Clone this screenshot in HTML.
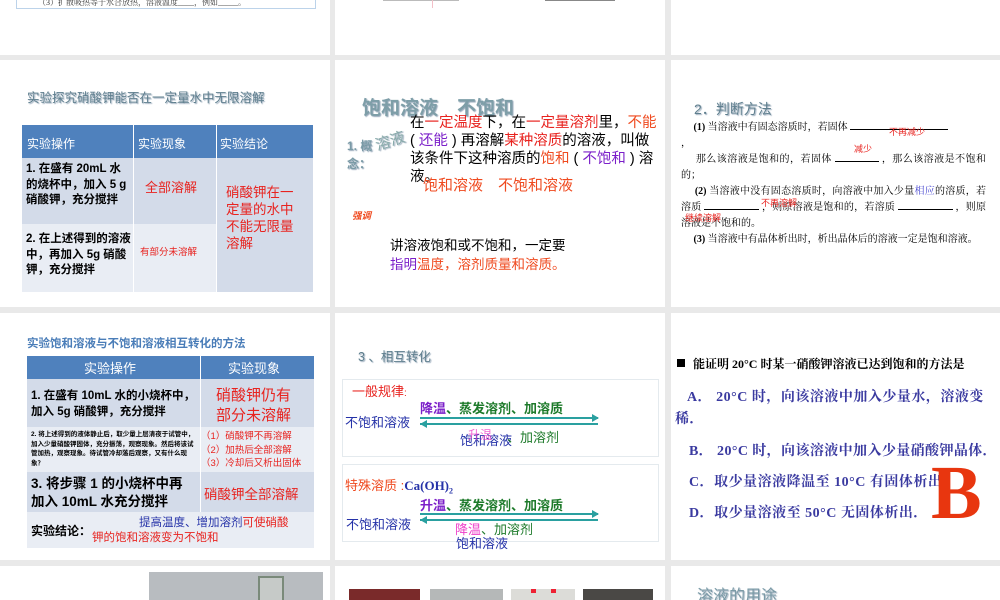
<!DOCTYPE html>
<html><head><meta charset="utf-8">
<style>
*{margin:0;padding:0;box-sizing:border-box}
body{width:1000px;height:600px;background:#e9e9e9;position:relative;overflow:hidden;font-family:"Liberation Sans","Noto Sans CJK SC",sans-serif;color:#000}
.s{position:absolute;background:#fff;overflow:hidden}
.a{position:absolute;white-space:nowrap}
.r{color:#e8231f}.p{color:#7b1fc9}.o{color:#ef4a1f}.b{color:#2532a8}.g{color:#1d7a2a}.m{color:#ee3ec9}
.ttl{color:#6f8f9a;text-shadow:1px 1px 1px #9ab}
.serif{font-family:"Liberation Serif","Noto Serif CJK SC",serif}
</style></head><body>

<!-- Row1 -->
<div class="s" style="left:0;top:0;width:330px;height:55px">
  <div class="a" style="left:16px;top:-2px;width:300px;height:11px;border:1px solid #bcd3ea;border-top:none;background:#fff"></div>
  <div class="a serif" style="left:38px;top:-3px;font-size:8px;color:#333">（3）扩散吸热等于水合放热，溶液温度____，例如_____。</div>
</div>
<div class="s" style="left:335px;top:0;width:330px;height:55px">
  <div class="a" style="left:48px;top:0;width:76px;height:1px;background:#bbb"></div>
  <div class="a" style="left:97px;top:0;width:1px;height:8px;background:#f3c0c8"></div>
  <div class="a" style="left:210px;top:0;width:70px;height:1px;background:#888"></div>
</div>
<div class="s" style="left:671px;top:0;width:329px;height:55px"></div>

<!-- Row2 col1 -->
<div class="s" style="left:0;top:60px;width:330px;height:247px">
  <div class="a ttl" style="left:27px;top:27px;font-size:12.5px;color:#5f7f8e">实验探究硝酸钾能否在一定量水中无限溶解</div>
  <div class="a" style="left:22px;top:65px;width:291px;height:33px;background:#4f81bd"></div>
  <div class="a" style="left:133px;top:65px;width:1px;height:167px;background:#fff"></div>
  <div class="a" style="left:216px;top:65px;width:1px;height:167px;background:#fff"></div>
  <div class="a" style="left:22px;top:98px;width:111px;height:66px;background:#d3dbe9"></div>
  <div class="a" style="left:134px;top:98px;width:82px;height:66px;background:#d3dbe9"></div>
  <div class="a" style="left:22px;top:164px;width:111px;height:68px;background:#e9edf4"></div>
  <div class="a" style="left:134px;top:164px;width:82px;height:68px;background:#e9edf4"></div>
  <div class="a" style="left:217px;top:98px;width:96px;height:134px;background:#d3dbe9"></div>
  <div class="a" style="left:27px;top:75px;font-size:12px;color:#fff">实验操作</div>
  <div class="a" style="left:138px;top:75px;font-size:12px;color:#fff">实验现象</div>
  <div class="a" style="left:220px;top:75px;font-size:12px;color:#fff">实验结论</div>
  <div class="a" style="left:26px;top:102px;font-size:11.5px;line-height:15.5px;font-weight:bold;white-space:normal;width:106px">1. 在盛有 20mL 水的烧杯中，加入 5 g 硝酸钾，充分搅拌</div>
  <div class="a r" style="left:145px;top:117px;font-size:13px">全部溶解</div>
  <div class="a" style="left:26px;top:172px;font-size:11.5px;line-height:15.5px;font-weight:bold;white-space:normal;width:106px">2. 在上述得到的溶液中，再加入 5g 硝酸钾，充分搅拌</div>
  <div class="a r" style="left:140px;top:184px;font-size:9.5px">有部分未溶解</div>
  <div class="a r" style="left:226px;top:124px;font-size:13.5px;line-height:17px;white-space:normal;width:80px">硝酸钾在一定量的水中不能无限量溶解</div>
</div>

<!-- Row2 col2 -->
<div class="s" style="left:335px;top:60px;width:330px;height:247px">
  <div class="a ttl" style="left:27px;top:33px;font-size:19px;color:#7e9ea8;font-weight:bold">饱和溶液　不饱和</div>
  <div class="a ttl" style="left:40px;top:70px;font-size:15px;color:#8aa;transform:rotate(-18deg)">溶液</div>
  <div class="a ttl" style="left:12px;top:77px;font-size:12px;line-height:18px;color:#7a9aa6;font-weight:bold">1. 概<br>念：</div>
  <div class="a" style="left:75px;top:54px;font-size:14.5px;line-height:18px;white-space:normal;width:260px">在<span class="r">一定温度</span>下，在<span class="r">一定量溶剂</span>里，<span class="o">不能</span><br>( <span class="p">还能</span> ) 再溶解<span class="r">某种溶质</span>的溶液，叫做<br>该条件下这种溶质的<span class="o">饱和</span> ( <span class="p">不饱和</span> ) 溶<br>液。</div>
  <div class="a o" style="left:88px;top:114px;font-size:15px">饱和溶液　不饱和溶液</div>
  <div class="a o" style="left:17px;top:148px;font-size:9.5px;font-style:italic;font-weight:bold">强调</div>
  <div class="a" style="left:55px;top:176px;font-size:13.5px;line-height:19px">讲溶液饱和或不饱和，一定要<br><span class="p">指明</span><span class="o">温度，溶剂质量和溶质。</span></div>
</div>

<!-- Row2 col3 -->
<div class="s serif" style="left:671px;top:60px;width:329px;height:247px">
  <div class="a ttl" style="left:23px;top:39px;font-size:14px;color:#5f7f8e;font-family:'Liberation Sans','Noto Sans CJK SC',sans-serif">2．判断方法</div>
  <div class="a" style="left:10px;top:60px;font-size:10px;line-height:16px;white-space:normal;width:305px;text-align:justify">
  &nbsp;&nbsp;&nbsp;&nbsp;&nbsp;<b>(1)</b> 当溶液中有固态溶质时，若固体 <span style="display:inline-block;width:98px;border-bottom:1px solid #000"></span><br>，<br>
  &nbsp;&nbsp;&nbsp;&nbsp;&nbsp;那么该溶液是饱和的，若固体 <span style="display:inline-block;width:44px;border-bottom:1px solid #000"></span> ，那么该溶液是不饱和的；<br>
  &nbsp;&nbsp;&nbsp;&nbsp;&nbsp;<b>(2)</b> 当溶液中没有固态溶质时，向溶液中加入少量<span style="color:#4a4ad0">相应</span>的溶质，若溶质 <span style="display:inline-block;width:55px;border-bottom:1px solid #000"></span> ，则原溶液是饱和的，若溶质 <span style="display:inline-block;width:55px;border-bottom:1px solid #000"></span> ，则原溶液是不饱和的。<br>
  &nbsp;&nbsp;&nbsp;&nbsp;&nbsp;<b>(3)</b> 当溶液中有晶体析出时，析出晶体后的溶液一定是饱和溶液。</div>
  <div class="a r" style="left:218px;top:65px;font-size:9px;font-family:'Liberation Sans','Noto Sans CJK SC',sans-serif">不再减少</div>
  <div class="a r" style="left:183px;top:82px;font-size:9px;font-family:'Liberation Sans','Noto Sans CJK SC',sans-serif">减少</div>
  <div class="a r" style="left:90px;top:136px;font-size:9px;font-family:'Liberation Sans','Noto Sans CJK SC',sans-serif">不再溶解</div>
  <div class="a r" style="left:14px;top:151px;font-size:9px;font-family:'Liberation Sans','Noto Sans CJK SC',sans-serif">继续溶解</div>
</div>

<!-- Row3 col1 -->
<div class="s" style="left:0;top:313px;width:330px;height:247px">
  <div class="a" style="left:27px;top:22px;font-size:11.5px;color:#4a7db8;font-weight:bold">实验饱和溶液与不饱和溶液相互转化的方法</div>
  <div class="a" style="left:27px;top:43px;width:287px;height:23px;background:#4f81bd"></div>
  <div class="a" style="left:27px;top:66px;width:287px;height:48px;background:#d3dbe9"></div>
  <div class="a" style="left:27px;top:114px;width:287px;height:45px;background:#e9edf4"></div>
  <div class="a" style="left:27px;top:159px;width:287px;height:40px;background:#d3dbe9"></div>
  <div class="a" style="left:27px;top:199px;width:287px;height:36px;background:#e9edf4"></div>
  <div class="a" style="left:200px;top:43px;width:1px;height:156px;background:#fff"></div>
  <div class="a" style="left:84px;top:45px;font-size:13px;color:#fff">实验操作</div>
  <div class="a" style="left:228px;top:45px;font-size:13px;color:#fff">实验现象</div>
  <div class="a" style="left:31px;top:75px;font-size:11.5px;line-height:16px;font-weight:bold">1. 在盛有 10mL 水的小烧杯中，<br>加入 5g 硝酸钾，充分搅拌</div>
  <div class="a r" style="left:216px;top:73px;font-size:15px;line-height:20px">硝酸钾仍有<br>部分未溶解</div>
  <div class="a" style="left:31px;top:117px;font-size:6.5px;line-height:9.5px;font-weight:bold;white-space:normal;width:168px">2. 将上述得到的液体静止后，取少量上层清夜于试管中，加入少量硝酸钾固体，充分振荡，观察现象。然后将该试管加热，观察现象。待试管冷却落后观察，又有什么现象？</div>
  <div class="a r" style="left:201px;top:117px;font-size:9.5px;line-height:13.5px">（1）硝酸钾不再溶解<br>（2）加热后全部溶解<br>（3）冷却后又析出固体</div>
  <div class="a" style="left:31px;top:162px;font-size:13.5px;line-height:18px;font-weight:bold">3. 将步骤 1 的小烧杯中再<br>加入 10mL 水充分搅拌</div>
  <div class="a r" style="left:204px;top:170px;font-size:13.5px">硝酸钾全部溶解</div>
  <div class="a" style="left:31px;top:209px;font-size:12px;font-weight:bold">实验结论：</div>
  <div class="a" style="left:139px;top:201px;font-size:11.5px"><span class="b">提高温度、增加溶剂</span><span class="r">可使硝酸</span></div>
  <div class="a r" style="left:92px;top:216px;font-size:11.5px">钾的饱和溶液变为不饱和</div>
</div>

<!-- Row3 col2 -->
<div class="s" style="left:335px;top:313px;width:330px;height:247px">
  <div class="a ttl" style="left:23px;top:33px;font-size:12.5px;color:#5f7f8e">3 、相互转化</div>
  <div class="a" style="left:7px;top:66px;width:317px;height:78px;border:1px solid #e4eaee"></div>
  <div class="a" style="left:7px;top:151px;width:317px;height:78px;border:1px solid #e4eaee"></div>
  <div class="a r" style="left:17px;top:68px;font-size:13px">一般规律<span style="font-size:10px">:</span></div>
  <div class="a" style="left:85px;top:85px;font-size:13px;font-weight:bold"><span class="p">降温</span><span class="g">、蒸发溶剂、加溶质</span></div>
  <div class="a b" style="left:10px;top:99px;font-size:13px">不饱和溶液</div>
  <div class="a" style="left:85px;top:104px;width:178px;height:2px;background:#2aa0a0"></div>
  <div class="a" style="left:85px;top:110px;width:178px;height:2px;background:#2aa0a0"></div>
  <div class="a" style="left:257px;top:101px;border-left:7px solid #2aa0a0;border-top:4px solid transparent;border-bottom:4px solid transparent"></div>
  <div class="a" style="left:85px;top:107px;border-right:7px solid #2aa0a0;border-top:4px solid transparent;border-bottom:4px solid transparent"></div>
  <div class="a b" style="left:125px;top:117px;font-size:13px">饱和溶液</div>
  <div class="a m" style="left:133px;top:113px;font-size:12px;opacity:.8">升温</div>
  <div class="a g" style="left:172px;top:114px;font-size:13px">、加溶剂</div>
  <div class="a o" style="left:10px;top:162px;font-size:13px">特殊溶质 :<span class="b serif" style="font-weight:bold">Ca(OH)<sub style="font-size:8px">2</sub></span></div>
  <div class="a" style="left:85px;top:182px;font-size:13px;font-weight:bold"><span class="p">升温</span><span class="g">、蒸发溶剂、加溶质</span></div>
  <div class="a b" style="left:11px;top:201px;font-size:13px">不饱和溶液</div>
  <div class="a" style="left:85px;top:200px;width:178px;height:2px;background:#2aa0a0"></div>
  <div class="a" style="left:85px;top:206px;width:178px;height:2px;background:#2aa0a0"></div>
  <div class="a" style="left:257px;top:197px;border-left:7px solid #2aa0a0;border-top:4px solid transparent;border-bottom:4px solid transparent"></div>
  <div class="a" style="left:85px;top:203px;border-right:7px solid #2aa0a0;border-top:4px solid transparent;border-bottom:4px solid transparent"></div>
  <div class="a" style="left:120px;top:206px;font-size:13px"><span class="m">降温</span><span class="g">、加溶剂</span></div>
  <div class="a b" style="left:121px;top:220px;font-size:13px">饱和溶液</div>
</div>

<!-- Row3 col3 -->
<div class="s" style="left:671px;top:313px;width:329px;height:247px">
  <div class="a" style="left:6px;top:46px;width:8px;height:8px;background:#000"></div>
  <div class="a serif" style="left:22px;top:42px;font-size:12px;font-weight:bold">能证明 20°C 时某一硝酸钾溶液已达到饱和的方法是</div>
  <div class="a serif" style="left:4px;top:74px;font-size:14px;line-height:22px;font-weight:bold;color:#3a3aa0;white-space:normal;width:325px;letter-spacing:0.5px">&nbsp;&nbsp;&nbsp;A．&nbsp;20°C 时，向该溶液中加入少量水，溶液变稀．</div>
  <div class="a serif" style="left:18px;top:127px;font-size:14px;font-weight:bold;color:#3a3aa0;letter-spacing:0.4px">B．&nbsp;20°C 时，向该溶液中加入少量硝酸钾晶体．</div>
  <div class="a serif" style="left:18px;top:158px;font-size:14px;font-weight:bold;color:#3a3aa0;letter-spacing:0.5px">C．取少量溶液降温至 10°C 有固体析出．</div>
  <div class="a serif" style="left:18px;top:189px;font-size:14px;font-weight:bold;color:#3a3aa0;letter-spacing:0.5px">D．取少量溶液至 50°C 无固体析出．</div>
  <div class="a serif" style="left:260px;top:142px;font-size:76px;line-height:76px;font-weight:bold;color:#e8360f">B</div>
</div>

<!-- Row4 -->
<div class="s" style="left:0;top:566px;width:330px;height:34px">
  <div class="a" style="left:149px;top:6px;width:174px;height:30px;background:#b8bcc0"></div>
  <div class="a" style="left:258px;top:10px;width:26px;height:26px;border:2px solid #7a8a7a;border-bottom:none;background:#c6cac8"></div>
</div>
<div class="s" style="left:335px;top:566px;width:330px;height:34px">
  <div class="a" style="left:14px;top:23px;width:71px;height:11px;background:#7a2a2a"></div>
  <div class="a" style="left:95px;top:23px;width:73px;height:11px;background:#b5b8b8"></div>
  <div class="a" style="left:176px;top:23px;width:64px;height:11px;background:#dcdcd8"></div>
  <div class="a" style="left:196px;top:23px;width:5px;height:4px;background:#e23"></div>
  <div class="a" style="left:216px;top:23px;width:5px;height:4px;background:#e23"></div>
  <div class="a" style="left:248px;top:23px;width:70px;height:11px;background:#4a4845"></div>
</div>
<div class="s" style="left:671px;top:566px;width:329px;height:34px">
  <div class="a ttl" style="left:26px;top:16px;font-size:16px;color:#7a9aa6">溶液的用途</div>
</div>

</body></html>
